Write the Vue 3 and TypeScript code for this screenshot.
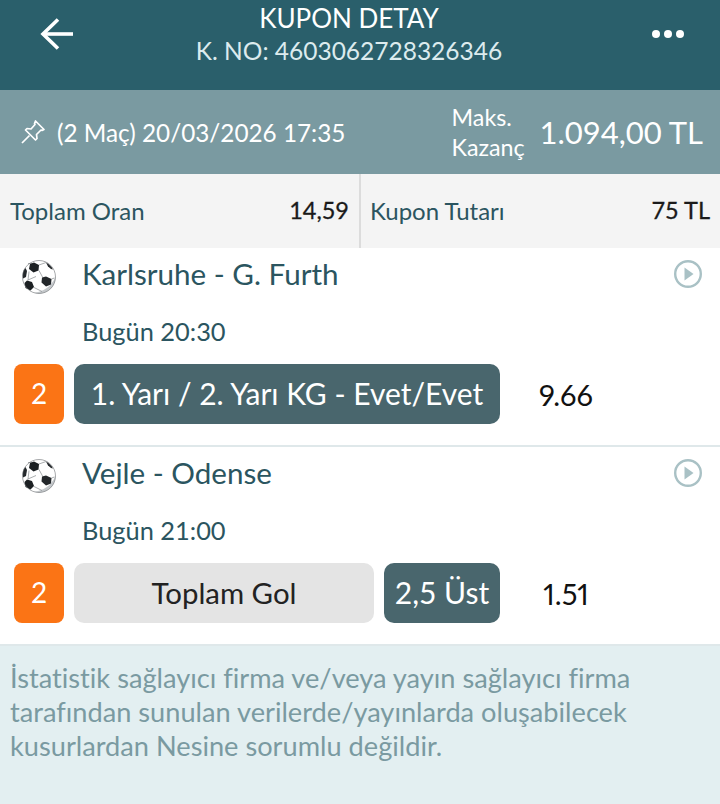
<template>
  <div class="page">
    <header class="topbar">
      <button class="icon-btn" aria-label="Geri">
        <svg width="36" height="36" viewBox="0 0 36 36" fill="none" stroke="#fff" stroke-width="3.600">
          <path d="M34 16H4" />
          <path d="M19 1.500 4 16l15 14.500" />
        </svg>
      </button>
      <div class="title">
        <div class="title-main">KUPON DETAY</div>
        <div class="title-sub">K. NO: 4603062728326346</div>
      </div>
      <div class="dots"><i></i><i></i><i></i></div>
    </header>

    <section class="summary">
      <div class="when">
        <svg width="26" height="26" viewBox="0 0 26 26" fill="none" stroke="#fff" stroke-width="1.700" stroke-linejoin="round">
          <path d="M15.500 2 24 10.500l-2 1-1-.5-4.500 4.500.5 4-1.500 1.500-10-10L7 9.500l4 .5L15 5.500l-.5-1z" />
          <path d="M9.500 16.500 2 24" />
        </svg>
        <span>(2 Maç) 20/03/2026 17:35</span>
      </div>
      <div class="gain-label">Maks.<br />Kazanç</div>
      <div class="gain">1.094,00 TL</div>
    </section>

    <section class="totals">
      <div class="total">
        <span class="total-label">Toplam Oran</span>
        <b>14,59</b>
      </div>
      <div class="total">
        <span class="total-label">Kupon Tutarı</span>
        <b>75 TL</b>
      </div>
    </section>

    <article v-for="m in matches" :key="m.name" class="match">
      <div class="match-head">
        <svg class="ball" width="36" height="36" viewBox="0 0 36 36">
          <circle cx="18" cy="18" r="16.500" fill="#fff" />
          <path d="M34.500 18A16.500 16.500 0 0 1 13 33.700C22 33 30 28 34.500 18z" fill="#c4c8cb" />
          <path d="M15 17.500 7 21M18 11.500l3.500 6.500M8 12.500 7 21M13 28.500l8 4M18 6l7-2.500M30.500 20l3-1M7 4.500l6 0" stroke="#85898c" stroke-width=".7" fill="none" />
          <path d="M13 3.500l5 2.500-.5 5.500-5 2-4.500-3.500 1-5z" fill="#1c2023" />
          <path d="M25 17.500l5.500 2.500-.5 5.500-5 2-4.500-4 .5-5z" fill="#23272a" />
          <path d="M6 21.500l5 1.500 2 5-3.500 3.500-5-2.500-1-5z" fill="#1c2023" />
          <path d="M4.500 9 6 12l-1 6-3 1.500C1.200 15 2 11 4.500 9z" fill="#23272a" />
          <path d="M25 3.500c3 1.500 5.500 4 7 7l-2-.5-3-2.500z" fill="#23272a" />
          <circle cx="18" cy="18" r="16.500" fill="none" stroke="#6b6f72" stroke-width=".6" />
        </svg>
        <div class="match-name">{{ m.name }}</div>
        <svg class="play" width="30" height="30" viewBox="0 0 30 30">
          <circle cx="15" cy="15" r="12.800" fill="none" stroke="#a9c1c5" stroke-width="2.400" />
          <path d="M11.500 8.500 20.500 15l-9 6.500z" fill="#a9c1c5" />
        </svg>
      </div>
      <div class="match-time">{{ m.time }}</div>
      <div class="pick">
        <div class="code">2</div>
        <template v-if="m.outcome">
          <div class="market light">{{ m.market }}</div>
          <div class="market outcome">{{ m.outcome }}</div>
        </template>
        <div v-else class="market wide">{{ m.market }}</div>
        <div class="odd">{{ m.odd }}</div>
      </div>
    </article>

    <footer class="note">
      İstatistik sağlayıcı firma ve/veya yayın sağlayıcı firma tarafından sunulan verilerde/yayınlarda oluşabilecek kusurlardan Nesine sorumlu değildir.
    </footer>
  </div>
</template>

<script setup lang="ts">
interface Match {
  name: string
  time: string
  market: string
  outcome?: string
  odd: string
}

const matches: Match[] = [
  { name: 'Karlsruhe - G. Furth', time: 'Bugün 20:30', market: '1. Yarı / 2. Yarı KG - Evet/Evet', odd: '9.66' },
  { name: 'Vejle - Odense', time: 'Bugün 21:00', market: 'Toplam Gol', outcome: '2,5 Üst', odd: '1.51' },
]
</script>

<style>
html,
body {
  margin: 0;
  background: #fff;
}
</style>

<style scoped>
.page {
  width: 720px;
  height: 804px;
  overflow: hidden;
  display: flex;
  flex-direction: column;
  font-family: Lato, "Noto Sans", sans-serif;
  font-variant-ligatures: none;
}

.topbar {
  height: 90px;
  flex: none;
  display: flex;
  align-items: flex-start;
  padding: 0 36px 0 38px;
  box-sizing: border-box;
  background: #2a5f6b;
  color: #fff;
}

.icon-btn {
  width: 38px;
  height: 36px;
  margin-top: 18px;
  padding: 0;
  border: none;
  background: none;
}

.title {
  flex: 1;
  text-align: center;
  margin: 2px 30px 0 0;
}

.title-main {
  font-size: 26px;
  line-height: 32px;
}

.title-sub {
  font-size: 24.500px;
  line-height: 34px;
  color: #dcebee;
}

.dots {
  display: flex;
  gap: 4px;
  margin-top: 30px;
}

.dots i {
  width: 8px;
  height: 8px;
  border-radius: 50%;
  background: #fff;
}

.summary {
  height: 84px;
  flex: none;
  display: flex;
  align-items: center;
  padding: 0 17px 0 20px;
  box-sizing: border-box;
  background: #7a9aa1;
  color: #fff;
}

.when {
  display: flex;
  align-items: center;
  gap: 11px;
  font-size: 24.300px;
  flex: 1;
}

.gain-label {
  font-size: 23.300px;
  line-height: 30px;
  width: 88px;
}

.gain {
  font-size: 31px;
}

.totals {
  height: 74px;
  flex: none;
  display: grid;
  grid-template-columns: 359px 361px;
  background: #f4f4f4;
}

.total {
  display: flex;
  align-items: center;
  justify-content: space-between;
  padding: 0 10px 2px;
  font-size: 24px;
}

.total + .total {
  border-left: 2px solid #dcdcdc;
  padding-left: 9px;
}

.total-label {
  color: #2b5560;
}

.total b {
  font-weight: 400;
  font-size: 23.500px;
  color: #1a1a1a;
  -webkit-text-stroke: 0.3px #1a1a1a;
}

.match {
  height: 199px;
  flex: none;
  box-sizing: border-box;
  padding: 7px 0 0 14px;
  border-bottom: 2px solid #dfe8ea;
}

.match-head {
  display: flex;
  align-items: center;
  height: 36px;
  position: relative;
}

.ball {
  margin: 8px 0 0 7px;
}

.match-name {
  margin-left: 25px;
  font-size: 29.600px;
  color: #2b5560;
}

.play {
  position: absolute;
  right: 17px;
  top: 4px;
}

.match-time {
  margin: 25px 0 0 68px;
  font-size: 25.400px;
  line-height: 30px;
  color: #2b5560;
}

.pick {
  display: flex;
  align-items: center;
  gap: 10px;
  margin-top: 18px;
  height: 60px;
}

.code {
  width: 50px;
  height: 60px;
  padding-bottom: 3px;
  box-sizing: border-box;
  border-radius: 8px;
  background: #fb7415;
  color: #fff;
  font-size: 28px;
  display: flex;
  align-items: center;
  justify-content: center;
}

.market {
  height: 60px;
  padding-bottom: 2px;
  border-radius: 10px;
  display: flex;
  align-items: center;
  justify-content: center;
  font-size: 30px;
  box-sizing: border-box;
}

.wide {
  width: 426px;
  background: #49666d;
  color: #fff;
}

.light {
  width: 300px;
  background: #e4e4e4;
  color: #222;
  font-size: 29.400px;
}

.outcome {
  width: 116px;
  background: #49666d;
  color: #fff;
}

.odd {
  width: 132px;
  margin-left: -10px;
  text-align: center;
  font-size: 29px;
  font-variant-numeric: proportional-nums;
  color: #111;
}

.note {
  flex: 1;
  padding: 15px 10px 0;
  background: #e3eff1;
  color: #7a9aa1;
  font-size: 27.200px;
  line-height: 34px;
}
</style>
